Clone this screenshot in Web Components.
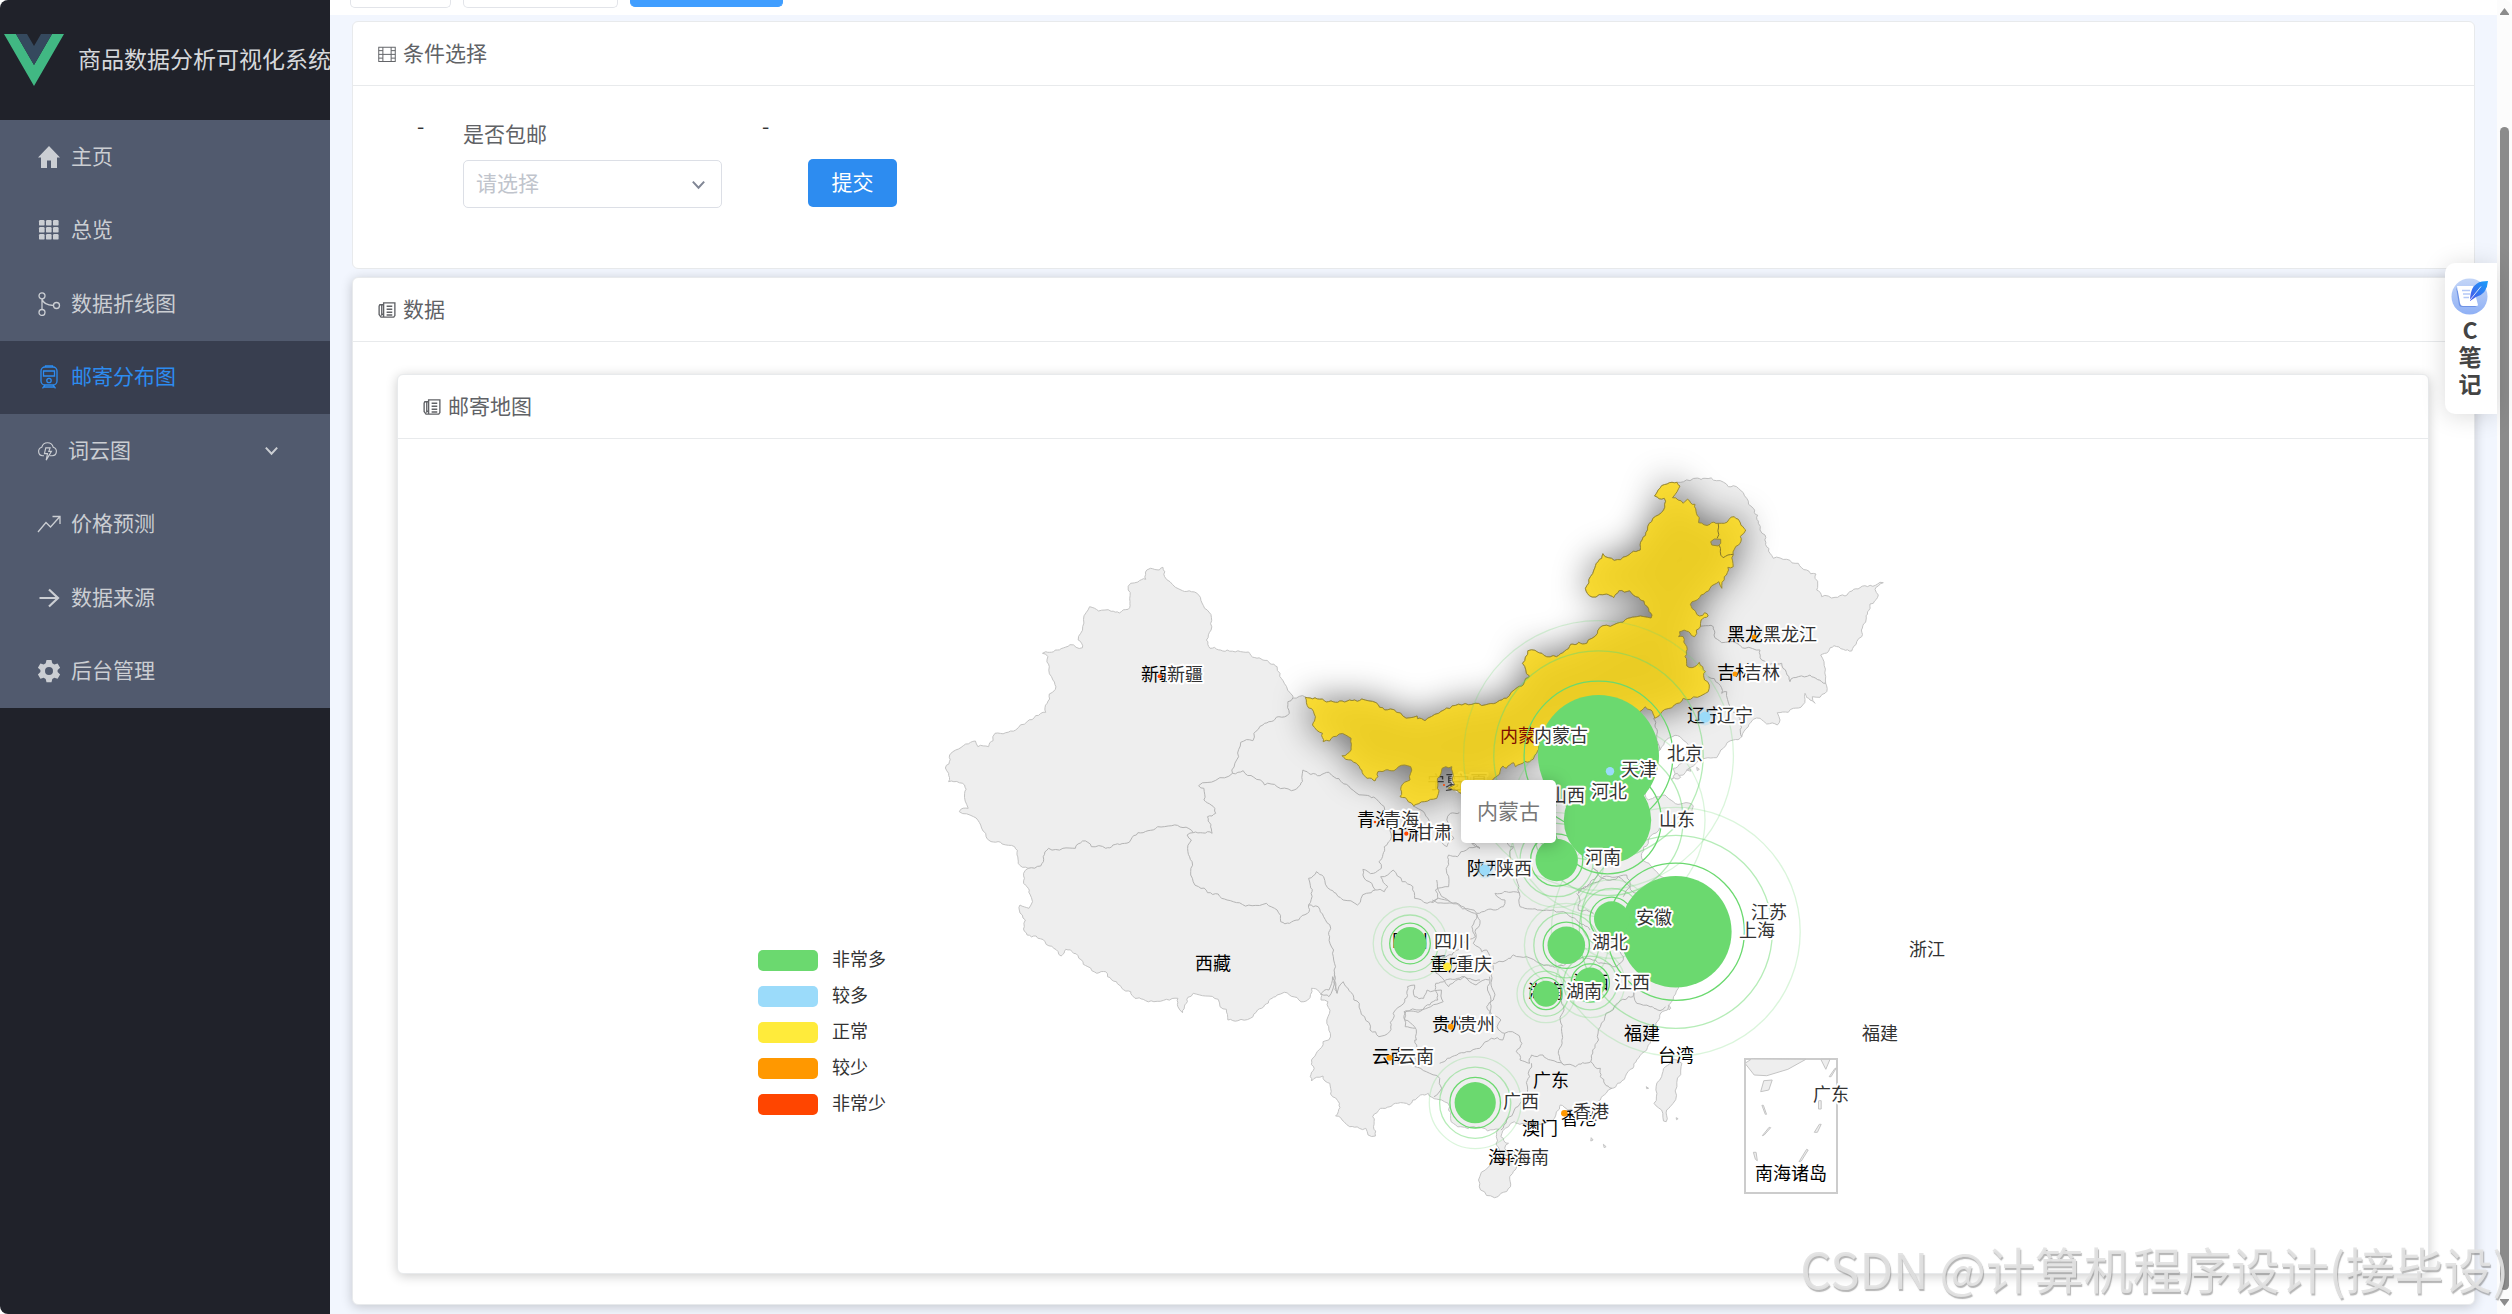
<!DOCTYPE html>
<html lang="zh-CN">
<head>
<meta charset="utf-8">
<title>商品数据分析可视化系统</title>
<style>
  html, body { height: 100%; margin: 0; }
  body { background: #fff; overflow: hidden; font-family: "Noto Sans CJK SC", "Noto Sans", sans-serif; font-size: 21px; color: #606266; }
</style>
</head>
<body>
<admin-app></admin-app>

<script>
const define = (name, html, setup) => {
  const tpl = document.createElement('template');
  tpl.innerHTML = html;
  customElements.define(name, class extends HTMLElement {
    constructor() {
      super();
      this.attachShadow({ mode: 'open' }).append(tpl.content.cloneNode(true));
    }
    connectedCallback() { if (setup) setup(this, this.shadowRoot); }
  });
};

/* ---------- icons ---------- */
const ICONS = {
  home: '<path fill="currentColor" stroke="none" d="M12 1 L1 12.5 H4 V23 H10 V15.5 H14 V23 H20 V12.5 H23 Z"/>',
  grid: '<g fill="currentColor" stroke="none">' + [2, 9, 16].map(y => [2, 9, 16].map(x => `<rect x="${x}" y="${y}" width="5.6" height="5.6" rx="1.2"/>`).join('')).join('') + '</g>',
  share: '<circle cx="5" cy="3.8" r="3"/><circle cx="5" cy="20.5" r="3"/><circle cx="19.5" cy="13.5" r="3"/><path d="M5 7V17.5M5 7C6 11 10 13.2 16.5 13.5"/>',
  train: '<rect x="4" y="2" width="16" height="18" rx="4"/><path d="M8.5 2V.8h7V2M6.5 6h11v5h-11zM8 20l-2.5 3.4M16 20l2.5 3.4M7 22h10"/><circle cx="12" cy="15.5" r="2.2"/>',
  cloud: '<path d="M8 18H6.5a5 5 0 0 1-1-9.8 6.7 6.7 0 0 1 13 0A5 5 0 0 1 17.500 18H14.500"/><path d="M10 9h5l-1.500 4h3l-6 10 1.500-7.500H8.500z"/>',
  trend: '<path d="M1 20L9 10.500L13.500 15L22.500 5M15.500 4.500H23V12"/>',
  right: '<path stroke-width="2.2" d="M2.500 12H21M12 3.500L21 12L12 20.500"/>',
  gear: '<path fill="currentColor" stroke="none" fill-rule="evenodd" d="M9.500 1h5l.8 3.300 2 1.200 3.300-1 2.500 4.300-2.500 2.300v2l2.500 2.300-2.500 4.300-3.300-1-2 1.200-.8 3.300h-5l-.8-3.300-2-1.200-3.300 1L.9 15.400l2.500-2.300v-2L.9 8.800l2.500-4.300 3.300 1 2-1.200zM12 8a4 4 0 1 0 0 8 4 4 0 0 0 0-8z"/>',
  film: '<rect x="1" y="3" width="22" height="19"/><path d="M6.500 3V22M17.500 3V22M6.500 12.500H17.500M1 7.500H6.500M1 12.500H6.500M1 17.500H6.500M17.500 7.500H23M17.500 12.500H23M17.500 17.500H23"/>',
  news: '<path stroke-width="1.800" d="M7.500 2.500H22.500V19.500L21 21.500H7.500zM7.500 5H2.500L1.500 7V18L4 21.500H9M7.500 5V17L5 18.500V6"/><path stroke-width="2" d="M11.500 7H19M11.500 11H19M11.500 15H19M11.500 18.500H19"/>',
  down: '<path stroke-width="2.800" d="M4 8L12 16.500L20 8"/>'
};
define('ui-icon', `<style>
  :host { display: block; width: 24px; height: 24px; flex: none; }
  svg { display: block; width: 100%; height: 100%; fill: none; stroke: currentColor; stroke-width: 1.3; }
</style><svg viewBox="0 0 24 24"></svg>`, (el, root) => {
  root.querySelector('svg').innerHTML = ICONS[el.getAttribute('name')];
});

/* ---------- side bar ---------- */
define('menu-item', `<style>
  :host { display: grid; }
  a { display: flex; align-items: center; gap: 10px; padding: 0 50px 0 37px; color: #cbced3; text-decoration: none; line-height: 32px; }
  :host([active]) a { background: #383e4f; color: #2d8cf0; }
  ui-icon { width: 24px; height: 24px; }
  :host([sub]) ui-icon { width: 21px; height: 21px; }
  .label { flex: 1; padding-bottom: 4px; }
  :host([sub]) .arrow { width: 17px; height: 17px; }
</style><a href="#"><ui-icon></ui-icon><span class="label"><slot></slot></span></a>`, (el, root) => {
  root.querySelector('ui-icon').replaceWith(Object.assign(document.createElement('span'), { innerHTML: `<ui-icon name="${el.getAttribute('icon')}"></ui-icon>` }).firstChild);
  if (el.hasAttribute('sub')) root.querySelector('a').insertAdjacentHTML('beforeend', '<ui-icon class="arrow" name="down"></ui-icon>');
});

define('side-bar', `<style>
  :host { display: block; width: 330px; flex: none; background: #20222a; border-radius: 8px 0 0 8px; overflow: hidden; }
  header { display: flex; align-items: center; gap: 14px; height: 120px; padding-left: 4px; box-sizing: border-box; color: #d6d8db; font-size: 23px; white-space: nowrap; }
  header svg { width: 60px; height: 52px; flex: none; }
  header span { padding-bottom: 4px; }
  nav { display: grid; grid-auto-rows: 1fr; min-height: 588px; background: #515a6e; }
</style>
<header>
  <svg viewBox="0 0 60 52"><path fill="#41b883" d="M0 0H12L30 31L48 0H60L30 52Z"/><path fill="#35495e" d="M12 0H23L30 12L37 0H48L30 31Z"/></svg>
  <span>商品数据分析可视化系统</span>
</header>
<nav>
  <menu-item icon="home">主页</menu-item>
  <menu-item icon="grid">总览</menu-item>
  <menu-item icon="share">数据折线图</menu-item>
  <menu-item icon="train" active>邮寄分布图</menu-item>
  <menu-item icon="cloud" sub>词云图</menu-item>
  <menu-item icon="trend">价格预测</menu-item>
  <menu-item icon="right">数据来源</menu-item>
  <menu-item icon="gear">后台管理</menu-item>
</nav>`);

/* ---------- tag strip (scrolled almost out of view) ---------- */
define('tag-strip', `<style>
  :host { display: flex; gap: 12px; height: 15px; padding-left: 20px; background: #fff; }
  i { box-sizing: border-box; width: 155px; height: 8px; border: 1px solid #e2e4e9; border-top: 0; border-radius: 0 0 5px 5px; background: #fff; }
  i.short { width: 101px; }
  i.on { width: 153px; background: #409eff; border-color: #409eff; height: 7px; }
</style><i class="short"></i><i></i><i class="on"></i>`);

/* ---------- card ---------- */
define('panel-card', `<style>
  :host { display: block; background: #fff; border: 1px solid #e8eaec; border-radius: 6px; }
  :host([raised]) { box-shadow: 0 2px 12px rgba(0, 0, 0, .2); }
  header { display: flex; align-items: center; gap: 7px; box-sizing: border-box; height: 64px; padding: 0 25px; border-bottom: 1px solid #e8eaec; line-height: 32px; }
  header span { padding-bottom: 4px; }
</style>
<header><slot name="icon"></slot><span><slot name="title"></slot></span></header>
<slot></slot>`);

/* ---------- filter form ---------- */
define('filter-form', `<style>
  form { display: flex; align-items: flex-start; padding: 31px 0 60px 64px; margin: 0; }
  .dash { width: 46px; line-height: 16px; color: #333; }
  .field { display: flex; flex-direction: column; gap: 11px; width: 259px; margin-right: 40px; }
  label { line-height: 32px; }
  .box { position: relative; display: grid; }
  select { appearance: none; height: 48px; box-sizing: border-box; padding: 0 12px 4px; border: 1px solid #dcdfe6; border-radius: 5px; background: #fff; color: #c0c4cc; font: inherit; }
  .box ui-icon { position: absolute; right: 15px; top: 16px; width: 17px; height: 17px; color: #808695; pointer-events: none; }
  button { height: 48px; width: 89px; margin-top: 42px; padding: 0 0 4px; border: 0; border-radius: 5px; background: #2d8cf0; color: #fff; font: inherit; }
</style>
<form>
  <span class="dash">-</span>
  <div class="field">
    <label for="post">是否包邮</label>
    <div class="box"><select id="post"><option>请选择</option></select><ui-icon name="down"></ui-icon></div>
  </div>
  <span class="dash">-</span>
  <button type="button">提交</button>
</form>`);

/* ---------- map ---------- */
/* Outlines are lists of points; a letter switches to the sheet that the following points are measured on. */
const SHEETS = {
  A: [920, 540, 2.8, 3], B: [1260, 460, 2.8, 3], C: [1340, 680, 3, 3],
  D: [1300, 960, 2.6133, 3], E: [1560, 460, 3, 3]
};
const points = text => {
  let s = SHEETS.A; const out = [];
  for (const t of text.trim().split(/\s+/)) {
    if (SHEETS[t]) { s = SHEETS[t]; continue; }
    const [u, v] = t.split(',').map(Number);
    out.push([s[0] + u / s[2], s[1] + v / s[3]]);
  }
  return out;
};
const noise = (x, y) => { const n = Math.sin(x * 12.9898 + y * 78.233) * 43758.5453; return (n - Math.floor(n)) * 2 - 1; };
const roughen = (pts, depth) => {
  if (!depth) return pts;
  const out = [pts[0]];
  for (let i = 1; i < pts.length; i++) {
    const [a, b] = pts[i - 1], [c, d] = pts[i], dx = c - a, dy = d - b, len = Math.hypot(dx, dy);
    if (len > 4) {
      const k = noise(a + c, b + d) * Math.min(len * .2, 2) / len;
      out.push([(a + c) / 2 - dy * k, (b + d) / 2 + dx * k]);
    }
    out.push([c, d]);
  }
  return roughen(out, depth - 1);
};
const path = (text, close, depth = 3) => 'M' + roughen(points(text), depth).map(p => p[0].toFixed(1) + ' ' + p[1].toFixed(1)).join('L') + (close ? 'Z' : '');

const NORTH = `B 127,712 180,722 230,723 285,717 325,728 335,742 365,747 400,768 440,768 441,776 462,782 500,760 565,735 640,732 690,715 720,683 755,648 735,610 750,572 770,571 795,586 830,590 870,553 915,550 945,520 960,497 1000,490 1030,475 1055,470 1095,474 1098,465 1085,440 1060,412 1035,392 1005,392 990,413 970,402 930,411 911,385 925,350 935,330 960,281 975,293 1010,299 1040,278 1065,270 1070,240 1085,210 1100,175 1130,150 1132,115 1105,108 1115,90 1140,72 1168,67`;
const INNER = NORTH + ` 1176,78 1168,95 1155,113 1185,130 1197,118 1218,133 1222,160 1228,188 1260,193 1283,190 1300,190 1328,170 1360,210 1345,230 1340,255 1325,285 1325,320 1310,322 1300,350 1293,385 1285,365 1260,385 1235,405 1210,425 1205,433 1220,455 1230,468 1245,458 1255,468 1235,480 1233,500 1222,510 1217,530 1200,515 1175,515 1172,530 1185,530 1195,560 1190,590 1195,618 1210,623 1230,607 1247,635 1245,660 1258,675 1255,695 1225,712 1185,715 1160,735 1125,755 1105,775 1095,750 1078,740 1070,750 1000,780 900,800 800,840 780,860 770,885 755,905 730,912 715,920 710,908 690,925 680,918 672,935 655,955 640,970 560,1000 540,990 527,985 545,975 537,920 520,920 510,925 497,955 495,1015 460,1025 430,1037 415,1025 392,1010 395,980 420,960 422,920 405,915 375,932 330,935 330,950 322,963 300,955 285,930 270,910 255,900 230,887 255,870 255,835 240,825 205,830 195,843 177,845 175,820 147,795 155,770 127,712`;
const LAND = `A 71,684 81,672 83,645 100,630 128,612 155,603 162,620 192,620 210,580 240,578 268,570 300,545 352,517 356,490 362,462 379,448 372,420 362,380 358,350 343,340 352,335 395,326 420,314 437,322 455,323 443,300 450,280 475,200 500,213 535,214 558,219 583,208 588,185 583,150 590,130 610,126 632,118 635,90 645,85 670,90 680,82 685,110 700,125 735,152 760,155 785,172 797,205 816,232 815,270 802,300 812,325 860,330 920,336 960,360 1000,380 1008,400 1020,430 1044,468 1044,474 1080,472 ${NORTH}
 E 390,62 435,55 470,62 505,80 520,77 550,98 560,115 580,145 595,190 600,210 615,225 630,280 640,295 680,298 715,310 740,330 768,342 765,355 773,375 770,390 785,410 825,412 855,408 900,383 960,367 970,368 955,378 945,388 955,405 940,430 930,432 918,480 905,530 890,545 875,573 850,568 822,557 805,575 782,585 792,605 797,650 797,670 795,700 780,712 757,710 765,730 750,720 735,700 728,735 700,745 685,757 652,758 660,780 652,795 620,792 600,775 580,778 565,800 545,830 520,840 490,865 470,893 435,895 400,918 370,945 335,958 345,940 340,925 365,910 380,880 385,855 360,830 345,826 325,835 305,860 300,870
 C 940,250 928,300 915,345 925,360 950,350 975,345 1000,365 1030,370 1060,378 1055,400 1010,415 960,440 930,470 925,490 905,520 915,545 935,560 950,575 980,600 1010,650 1030,700 1020,740 1030,800 1040,850 1035,880 1015,925
 D 975,120 960,150 940,165 930,190 920,230 915,250 900,275 880,300 870,325 850,350 830,370 815,385 800,400 785,420 765,430 740,440 700,450 680,435 670,455 665,475 640,490 600,495 560,485 545,500 530,512 525,530 545,550 535,565 548,585 525,580 513,555 513,530 520,508 490,513 460,503 420,500 395,485 388,450 387,430 370,420 345,412 335,400 315,405 295,420 285,435 255,430 235,440 210,445 190,470 192,500 197,528 178,525 172,505 155,505 130,500 115,485 93,468 100,455 103,430 80,402 78,370 60,348 30,363 27,350 37,325 30,300 45,275 60,245 75,240 75,200 70,180 77,160 73,125 55,120 50,95 30,85 20,120
 A 1075,1385 1020,1357 1000,1365 965,1395 945,1410 925,1435 890,1442 862,1440 858,1408 840,1400 835,1378 800,1368 765,1360 750,1372 735,1418 722,1400 722,1375 690,1378 655,1385 625,1378 602,1375 590,1355 565,1345 550,1325 525,1310 520,1295 495,1300 470,1280 430,1240 408,1228 395,1248 375,1225 350,1205 325,1188 300,1185 292,1160 295,1140 278,1110 280,1095 305,1105 315,1085 300,1040 290,1030 290,1000 303,985 275,970 265,920 230,912 185,890 170,855 150,830 110,815 135,805 125,760 125,735 95,725 80,725 80,700 71,684`;
const ISLANDS = [
  'D 970,300 998,310 995,330 985,380 975,430 958,450 957,485 950,483 948,460 925,430 930,390 945,350 955,320 970,300',
  'D 500,610 530,600 568,605 562,630 548,650 550,680 525,700 508,713 472,690 470,650 500,610',
  'D 905,380 911,385 906,386', 'D 761,533 766,540 760,543', 'D 793,553 800,560 795,563', 'D 983,473 988,476 984,479',
  'C 1000,290 1012,280 1022,292 1005,296', 'C 1040,270 1050,266 1052,274', 'C 1070,262 1078,268 1072,272', 'C 985,975 992,985 987,990'
];
const BORDERS = [
  'A 1044,474 1030,485 1034,520 1005,530 960,555 935,580 932,602 898,607 892,650 873,690 875,700',
  'A 875,700 780,737 795,745 795,780 815,795 828,820 805,830 818,880 765,878',
  'A 765,878 705,857 665,860 610,878 590,900 540,915 520,925 480,920 455,903 435,925 400,925 360,925 345,950 338,978 303,985',
  'A 765,878 748,885 760,900 750,935 762,965 758,1005 780,1040 805,1058 835,1062 860,1080 930,1097 970,1090 1000,1110 1010,1145 1035,1150 1060,1140 1085,1120 1088,1095',
  'A 1088,1095 1115,1100 1130,1130 1150,1165 1147,1190 1158,1230 1160,1310 1168,1360',
  'A 875,700 905,692 935,712 965,735 1000,740 1040,752 1065,735 1072,690 1120,707 1145,697 1180,725 1205,745 1240,765 1285,785 1305,820 1320,890 1300,920 1285,965 1292,985 1270,1000 1240,988 1240,1005 1265,1030 1275,1050',
  'A 1088,1095 1095,1060 1088,1015 1110,995 1130,1010 1150,1050 1185,1080 1225,1095 1250,1060 1275,1050 1300,1055 1310,1040 1290,1010 1325,990 1350,1025 1380,1040 1385,1075 1420,1090 1450,1075',
  'A 1450,1075 1443,1050 1480,1040 1475,1000 1480,945 1505,950 1530,930 1568,925 C 395,490 420,505',
  'A 1380,797 1410,815 1425,840 1450,880 1475,920 1495,895 1485,870 1475,840 1485,820 1510,818',
  'A 1435,1080 1500,1088 1530,1110 1560,1125 1545,1160 1555,1190 1520,1210 1490,1245 1440,1250 1445,1300 1480,1340 1525,1310 1568,1320',
  'A 1122,1362 1145,1350 1155,1310 1168,1360 1185,1325 1215,1380 1230,1390 1245,1430 1260,1470 1285,1490 1315,1475 1325,1420 1355,1390 1365,1340 1385,1335 1385,1370 1410,1375 1420,1350 1460,1350 1465,1385 1430,1400 1400,1410 1360,1415 1358,1440 1385,1460 1390,1500 D 300,240 310,270 300,320 330,335 365,355 370,385 350,410',
  'A 1160,1300 1155,1350 1145,1370 1140,1365 1122,1362',
  'C 275,665 295,655 330,665 410,700 420,730 405,755 400,790 425,815 440,810 455,850 455,900 460,960 440,980 455,1040',
  'C 330,665 300,640 290,600', 'C 455,850 500,840 520,825 560,830 600,850 650,860 690,850',
  'C 410,700 440,690 490,680 495,660 465,640 520,635 540,640',
  'C 530,600 540,680 600,690 640,690 680,700 710,720 750,750', 'C 495,480 520,500 505,545 530,600',
  'C 710,640 720,660 715,690 760,700', 'C 760,565 775,580 740,620 715,640 735,620 790,590 860,585 870,620 850,650',
  'C 760,565 800,600 835,590 870,620 890,640', 'C 690,850 740,835 790,850 830,860 850,830 835,800',
  'D 365,310 385,295 410,285 435,275 470,265 500,235 530,240 535,220',
  'D 535,220 515,200 525,180 495,160 497,130 490,90 495,50', 'D 300,205 275,200 272,155 320,150 360,120 355,70 380,60 430,50 460,75 495,60',
  'D 535,220 555,215 575,235 580,250 565,275 575,300 600,310', 'D 600,310 605,285 635,285 655,300 690,315',
  'D 605,310 600,350 590,400 560,450 540,480 525,510', 'D 680,110 690,150 680,180 685,250 675,280 690,315 720,320 760,305 765,270 780,240 785,200 800,160 830,130 870,110 868,80',
  'D 760,305 785,325 785,350 815,385', 'D 870,90 880,130 915,140 935,150 955,140',
  'E 415,500 445,497 460,500 462,525 485,548 530,550 555,565 600,570 605,600 640,610 665,610 690,665 715,650 750,645 797,670',
  'E 445,650 475,670 485,700 500,695 510,740 540,775 545,830', 'E 280,775 290,830 300,870'
];
const SEA = [
  '1163,310 1180,297 1322,298 1275,328 1220,347 1187,345', '1361,298 1385,298 1374,328', '1212,362 1234,360 1225,390 1204,395',
  '1383,350 1398,325 1401,325 1388,350', '1207,436 1211,436 1219,463 1216,463', '1208,527 1226,502 1230,503 1213,525',
  '1185,577 1192,577 1195,602 1190,598', '1304,605 1324,568 1328,570 1310,603', '1344,517 1357,493 1362,493 1352,517', '1355,422 1362,422 1362,447 1355,447'
];
/* name, x, y of the province labels and of the labels beside each point */
const BASE = [['新疆',1141,673],['西藏',1195,962],['青海',1357,818],['甘肃',1389,832],['黑龙江',1727,633],['吉林',1717,671],['辽宁',1687,714],['四川',1392,939],['重庆',1430,963],['陕西',1467,867],['湖南',1528,990],['江西',1573,981],['贵州',1432,1023],['云南',1372,1055],['广东',1533,1079],['台湾',1658,1054],['福建',1624,1032],['香港',1561,1117],['澳门',1522,1127],['海南',1488,1156],['南海诸岛',1755,1172]];
const OVER = [['甘肃',1416,831],['新疆',1167,673],['青海',1383,818],['内蒙古',1534,734],['黑龙江',1763,633],['吉林',1744,671],['辽宁',1717,714],['北京',1667,752],['天津',1621,768],['河北',1591,790],['山西',1549,794],['山东',1659,818],['河南',1585,856],['安徽',1636,916],['江苏',1751,911],['上海',1739,929],['浙江',1909,948],['湖北',1592,941],['四川',1434,940],['重庆',1456,963],['陕西',1496,867],['江西',1614,981],['湖南',1566,990],['贵州',1459,1023],['云南',1398,1055],['广西',1503,1100],['广东',1813,1093],['福建',1862,1032],['香港',1573,1110],['海南',1513,1156]];
const BIG = [[1598.5,755.5,60.5],[1607.5,820,43.7],[1556.7,860,21.2],[1675.8,931.8,55.8],[1611.7,919,17.7],[1566.3,945.3,18.8],[1590.3,983,15.5],[1546,993.7,13],[1410,943.5,16.5],[1475.2,1102.7,20.6]];
const DOTS = [[1754,637,2.5,'#ff9800'],[1735,674,2.5,'#ff9800'],[1705,717,5.5,'#9bdbfa'],[1610,771.3,4.2,'#9bdbfa'],[1526,737,1,'#ff4500'],[1444,785,1,'#ff4500'],[1375,822,1.3,'#ff4500'],[1406.3,833.7,2.1,'#ff4500'],[1484.7,870,5.5,'#9bdbfa'],[1447.3,966.7,4.2,'#ffeb3b'],[1450.7,1026.7,3,'#ff9800'],[1389.5,1057.7,3,'#ff9800'],[1564.4,1113.3,3.3,'#ff9800'],[1506.6,1159.5,1,'#ff4500'],[1159.6,676.3,2,'#ff4500']];
const LEGEND = [['非常多','#6bd96f'],['较多','#9bdbfa'],['正常','#ffeb3b'],['较少','#ff9800'],['非常少','#ff4500']];

define('china-map', `<style>
  :host { display: block; }
  svg { display: block; width: 100%; height: auto; }
  text { font-size: 18px; dominant-baseline: central; }
  .land path { fill: #eee; stroke: #c4c4c4; stroke-width: 1; stroke-linejoin: round; }
  .land .line { fill: none; stroke: #b4b4b4; }
  .inner { fill: rgb(254, 219, 26); fill-opacity: .87; stroke: #9b8a30; stroke-width: 1; }
  .base text { fill: #000; }
  .base .hot { fill: #7d0c00; }
  .over text { fill: #333; stroke: #fff; stroke-width: 4px; stroke-linejoin: round; paint-order: stroke; }
  .faint { opacity: .65; }
  .rings circle { fill: none; stroke: #6bd96f; stroke-width: 1.3; }
  .legend text { fill: #333; }
  .tip rect { fill: #fff; filter: drop-shadow(1px 2px 8px rgba(0, 0, 0, .25)); }
  .tip text { font-size: 21px; fill: #777; }
</style>
<svg viewBox="398 439 2030 834"></svg>`, (el, root) => {
  const label = ([t, x, y]) => `<text x="${x}" y="${y}">${t}</text>`;
  root.querySelector('svg').innerHTML = `
    <defs><filter id="soft" x="-20%" y="-30%" width="140%" height="160%"><feGaussianBlur stdDeviation="18"/></filter></defs>
    <g class="land">
      <path d="${path(LAND, true)}"/>
      ${ISLANDS.map(s => `<path d="${path(s, true, 2)}"/>`).join('')}
      ${BORDERS.map(s => `<path class="line" d="${path(s)}"/>`).join('')}
      <rect x="1745" y="1059" width="92" height="134" fill="none" stroke="#ccc" stroke-width="2"/>
      ${SEA.map(s => `<path d="${path('D ' + s, true, 0)}"/>`).join('')}
    </g>
    <path d="${path(INNER, true)}" filter="url(#soft)" opacity=".56"/>
    <g class="base">${BASE.map(label).join('')}</g>
    <g class="base faint">${label(['宁夏', 1427, 781])}</g>
    <g class="over faint">${label(['宁夏', 1452, 781])}</g>
    <path class="inner" d="${path(INNER, true)}"/>
    <path d="${path('B 1262,245 1272,237 1290,238 1290,250 1283,258 1265,255', true, 0)}" fill="#999" stroke="#9b8a30"/>
    <path d="${path('B 1283,190 1280,235')}${path('B 1286,256 1297,293 1310,285 1325,283')}" fill="none" stroke="#85762a"/>
    <g class="base"><text class="hot" x="1500" y="734">内蒙古</text></g>
    <g class="rings">${BIG.map(([x, y, r]) => [[1.23, 1], [1.73, .5], [2.23, .25]].map(([k, o]) => `<circle cx="${x}" cy="${y}" r="${(r * k).toFixed(1)}" opacity="${o}"/>`).join('')).join('')}</g>
    <g fill="#6bd96f">${BIG.map(([x, y, r]) => `<circle cx="${x}" cy="${y}" r="${r}"/>`).join('')}</g>
    ${DOTS.map(([x, y, r, c]) => `<circle cx="${x}" cy="${y}" r="${r}" fill="${c}"/>` + (r > 5 ? `<circle cx="${x}" cy="${y}" r="${r + 3}" fill="${c}" opacity=".3"/>` : '')).join('')}
    <g class="over">${OVER.map(label).join('')}</g>
    <g class="legend">${LEGEND.map(([t, c], i) => `<rect x="758" y="${950 + i * 36}" width="60" height="21" rx="5" fill="${c}"/><text x="832" y="${958 + i * 36}">${t}</text>`).join('')}</g>
    <g class="tip"><rect x="1461" y="780" width="95" height="63" rx="5"/><text x="1477" y="810">内蒙古</text></g>`;
});

/* ---------- floating note button ---------- */
define('note-tab', `<style>
  :host { position: absolute; right: 15px; top: 263px; }
  button { display: flex; flex-direction: column; align-items: center; width: 52px; padding: 15px 2px 17px 0; border: 0; border-radius: 10px 0 0 10px; background: #fff; box-shadow: 0 2px 24px rgba(0, 0, 0, .15); font: bold 23px/27px "Noto Sans CJK SC", sans-serif; color: #444; }
  svg { width: 38px; height: 38px; }
</style>
<button type="button">
  <svg viewBox="0 0 38 38">
    <defs><linearGradient id="disc" x1="0" y1="0" x2="0" y2="1"><stop offset="0" stop-color="#c3d5f7"/><stop offset="1" stop-color="#8fb0f5"/></linearGradient>
    <linearGradient id="quill" x1="1" y1="0" x2="0" y2="1"><stop offset="0" stop-color="#18a0fb"/><stop offset="1" stop-color="#4a55e8"/></linearGradient></defs>
    <circle cx="18.500" cy="18.500" r="18" fill="url(#disc)"/>
    <path fill="#6f93e6" d="M5 9L8 27Q8.500 29 11 29H26L22 27H13Z"/>
    <path fill="#fff" d="M6 8H22L27 27Q27 28 25 28H12Q9.500 28 9 25Z"/>
    <path stroke="#b4c8f6" stroke-width="1.500" fill="none" d="M11 12.500H19M12 16H19M12.500 19.500H18"/>
    <path fill="url(#quill)" d="M37 3Q36 16 25 19L19 23Q19 6 31 3.500Z"/>
    <path stroke="#fff" stroke-width=".8" fill="none" d="M19 22L30 8.500"/>
  </svg>
  <span>C</span><span>笔</span><span>记</span>
</button>`);

/* ---------- scroll rail ---------- */
define('scroll-rail', `<style>
  :host { display: flex; flex-direction: column; align-items: center; justify-content: space-between; box-sizing: border-box; width: 15px; flex: none; padding: 8px 0; background: #fcfcfc; border-radius: 0 8px 8px 0; }
  svg { width: 9px; height: 7px; fill: #8b8b8b; flex: none; }
  i { width: 9px; flex: 1; margin: 112px 0 9px; border-radius: 5px; background: #8b8b8b; }
</style>
<svg viewBox="0 0 9 7"><path d="M4.500 0L9 6V7H0V6Z"/></svg><i></i><svg viewBox="0 0 9 7"><path d="M4.500 7L9 1V0H0V1Z"/></svg>`);

define('water-mark', `<style>
  :host { position: absolute; right: 3px; bottom: 9px; font-size: 49px; line-height: 74px; white-space: nowrap; color: rgba(226, 226, 226, .92); text-shadow: 1px 2px 1px rgba(110, 110, 110, .5); pointer-events: none; }
</style><slot></slot>`);

/* ---------- shell ---------- */
define('admin-app', `<style>
  :host { position: relative; display: flex; height: 100vh; overflow: hidden; }
  main { flex: 1; min-width: 0; background: #f2f6fe; overflow: hidden; }
  .stack { display: flex; flex-direction: column; gap: 8px; padding: 6px 22px 9px; }
  .body { padding: 32px 45px 30px 44px; }
  ui-icon { width: 18px; height: 18px; }
</style>
<side-bar></side-bar>
<main>
  <tag-strip></tag-strip>
  <div class="stack">
    <panel-card>
      <ui-icon slot="icon" name="film"></ui-icon><span slot="title">条件选择</span>
      <filter-form></filter-form>
    </panel-card>
    <panel-card raised>
      <ui-icon slot="icon" name="news"></ui-icon><span slot="title">数据</span>
      <div class="body">
        <panel-card raised>
          <ui-icon slot="icon" name="news"></ui-icon><span slot="title">邮寄地图</span>
          <china-map></china-map>
        </panel-card>
      </div>
    </panel-card>
  </div>
</main>
<scroll-rail></scroll-rail>
<note-tab></note-tab>
<water-mark>CSDN @计算机程序设计(接毕设)</water-mark>`);
</script>
</body>
</html>
